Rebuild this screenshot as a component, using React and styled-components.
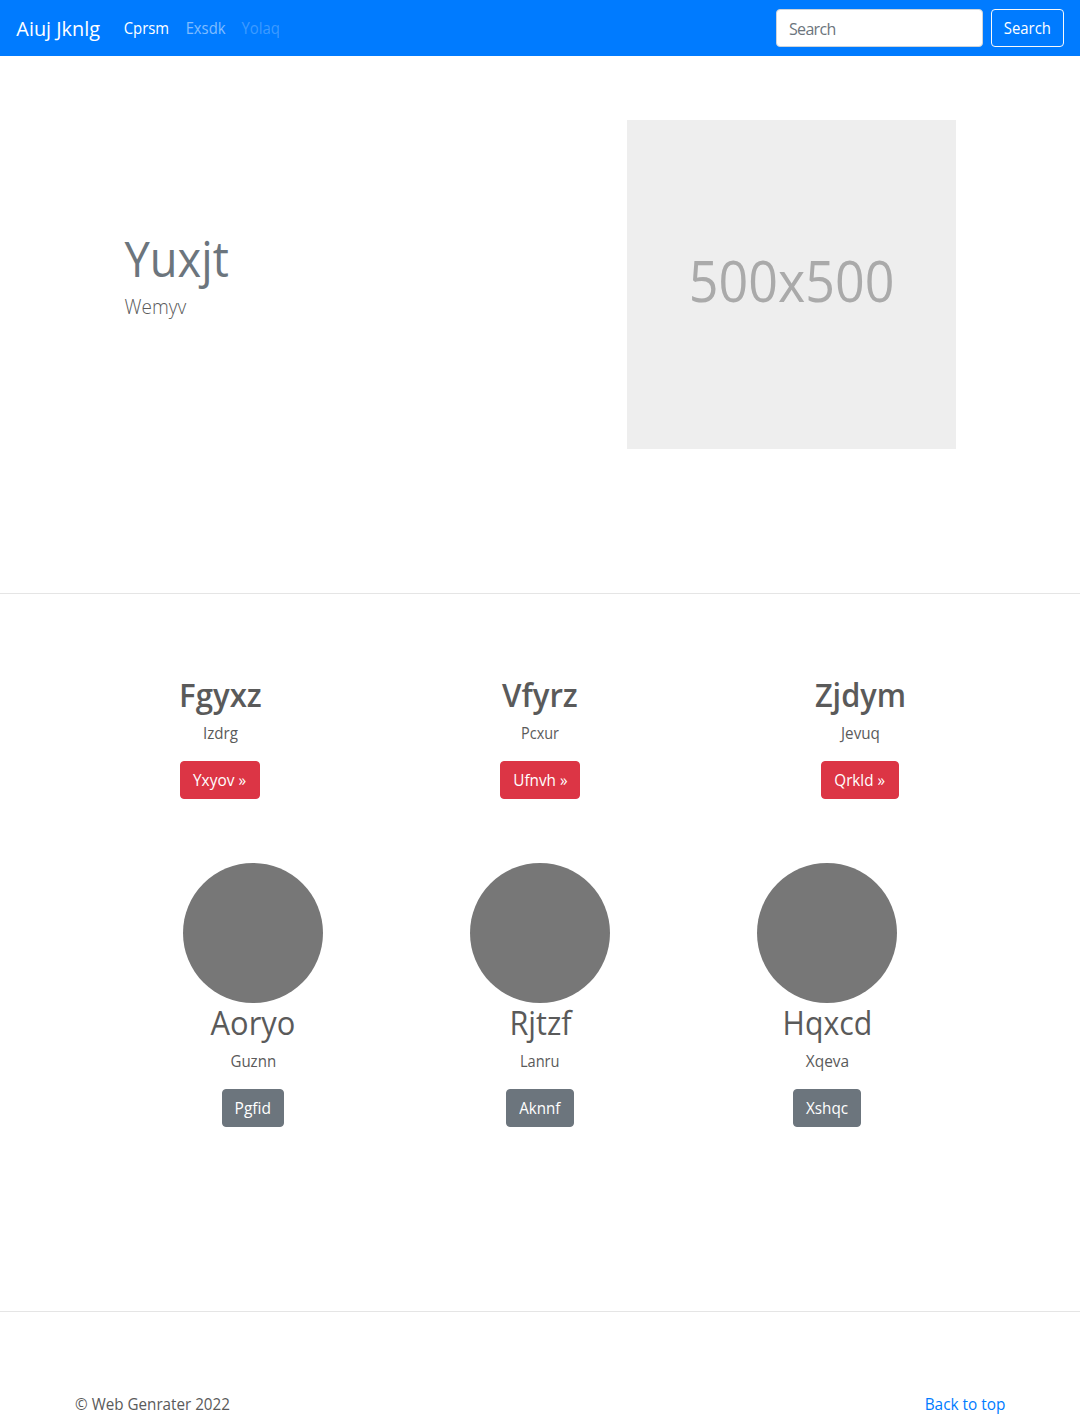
import React from "react";
import styled, { createGlobalStyle } from "styled-components";

const GlobalStyle = createGlobalStyle`
  *, *::before, *::after { box-sizing: border-box; }
  body {
    margin: 0;
    background: #fff;
    color: #5a5a5a;
    font: 400 16px/1.5 "Open Sans", "Noto Sans", sans-serif;
    font-variant-ligatures: none;
  }
  h1, h2, p { margin: 0; }
  a { text-decoration: none; }
`;

/* Text set slightly narrower than the font's natural width. */
const FitBox = styled.span`
  display: inline-flex;
  justify-content: center;
  width: ${(p) => p.$width}px;
  white-space: pre;
`;
const FitGlyphs = styled.span`
  flex: none;
  transform: scaleX(${(p) => p.$scale});
`;
const Fit = ({ w, k, children }) => (
  <FitBox $width={w}>
    <FitGlyphs $scale={k}>{children}</FitGlyphs>
  </FitBox>
);

const Page = styled.div`
  height: 1416px;
  overflow: hidden;
`;

const Navbar = styled.nav`
  display: flex;
  align-items: center;
  height: 56px;
  padding: 0 16px;
  background: #007bff;
`;
const Brand = styled.a`
  margin-right: 16px;
  padding-top: 2px;
  color: #fff;
  font-size: 20px;
  line-height: 30px;
`;
const NavLinks = styled.div`
  display: flex;
  flex: 1;
`;
const NavLink = styled.a`
  display: flex;
  padding: 8px;
  color: rgba(255, 255, 255, ${(p) => p.$alpha});
`;
const SearchForm = styled.form`
  display: flex;
  gap: 8px;
`;
const SearchInput = styled.input`
  width: 207px;
  height: 38px;
  padding: 8px 12px 6px;
  border: 1px solid #ced4da;
  border-radius: 4px;
  background: #fff;
  font: inherit;
  letter-spacing: -0.68px;
  outline: none;
  &::placeholder { color: #6c757d; opacity: 1; }
`;

const tones = {
  outline: ["transparent", "#f8f9fa"],
  danger: ["#dc3545", "#dc3545"],
  secondary: ["#6c757d", "#6c757d"],
};
const Button = styled.button`
  display: inline-flex;
  justify-content: center;
  height: 38px;
  padding: 6px 12px;
  border: 1px solid ${(p) => tones[p.$tone][1]};
  border-radius: 4px;
  background: ${(p) => tones[p.$tone][0]};
  color: #fff;
  font: inherit;
`;

const Hero = styled.section`
  display: flex;
  justify-content: space-between;
  height: 537px;
  padding: 64px 124px 0;
`;
const HeroCopy = styled.div`
  padding-top: 113px;
`;
const HeroTitle = styled.h1`
  color: #6c757d;
  font-size: 50px;
  font-weight: 400;
  line-height: 50px;
`;
const HeroLead = styled.p`
  margin-top: 9px;
  font-size: 20px;
  font-weight: 300;
  line-height: 30px;
`;
const Placeholder = styled.div`
  display: flex;
  align-items: center;
  justify-content: center;
  width: 329px;
  height: 329px;
  padding: 0 0 10px 1px;
  background: #eee;
  color: #aaa;
  font-size: 56px;
  line-height: 56px;
`;

const Rule = styled.hr`
  height: 1px;
  margin: 0;
  border: 0;
  background: rgba(0, 0, 0, 0.1);
`;

const Columns = styled.section`
  display: grid;
  grid-template-columns: repeat(3, 1fr);
  width: ${(p) => p.$width}px;
  margin: 0 auto;
  padding-top: ${(p) => p.$top}px;
`;
const Column = styled.article`
  display: flex;
  flex-direction: column;
  align-items: center;
`;
const Circle = styled.div`
  width: 140px;
  height: 140px;
  border-radius: 50%;
  background: #777;
`;
const Heading = styled.h2`
  display: flex;
  height: 38px;
  margin-bottom: 8px;
  padding-top: 1px;
  font-size: 32px;
  font-weight: ${(p) => p.$weight};
  line-height: 38px;
`;
const Blurb = styled.p`
  display: flex;
  margin-bottom: 16px;
`;

const Main = styled.main`
  height: 717px;
`;
const Footer = styled.footer`
  display: flex;
  justify-content: space-between;
  padding: 80px 75px 0;
`;
const FooterLink = styled.a`
  color: #007bff;
`;

const features = [
  { title: ["Fgyxz", 84, 0.975], text: ["Izdrg", 37, 0.945], action: ["Yxyov »", 54, 0.965] },
  { title: ["Vfyrz", 76, 0.975], text: ["Pcxur", 38, 0.902], action: ["Ufnvh »", 54, 0.957] },
  { title: ["Zjdym", 92, 0.96], text: ["Jevuq", 40, 0.95], action: ["Qrkld »", 52, 0.95] },
];
const people = [
  { title: ["Aoryo", 84, 0.965], text: ["Guznn", 46, 0.94], action: ["Pgfid", 36, 0.97] },
  { title: ["Rjtzf", 62, 0.955], text: ["Lanru", 40, 0.913], action: ["Aknnf", 42, 0.945] },
  { title: ["Hqxcd", 90, 0.945], text: ["Xqeva", 43, 0.966], action: ["Xshqc", 42, 0.955] },
];

const Label = ({ of: [text, w, k] }) => <Fit w={w} k={k}>{text}</Fit>;

export default function App() {
  return (
    <Page>
      <GlobalStyle />
      <Navbar>
        <Brand href="#"><Fit w={84} k={0.992}>Aiuj Jknlg</Fit></Brand>
        <NavLinks>
          <NavLink href="#" $alpha={1}><Fit w={45.8} k={0.93}>Cprsm</Fit></NavLink>
          <NavLink href="#" $alpha={0.5}><Fit w={39.7} k={0.923}>Exsdk</Fit></NavLink>
          <NavLink href="#" $alpha={0.25}><Fit w={38.4} k={0.93}>Yolaq</Fit></NavLink>
        </NavLinks>
        <SearchForm>
          <SearchInput placeholder="Search" aria-label="Search" />
          <Button type="button" $tone="outline"><Fit w={47} k={0.93}>Search</Fit></Button>
        </SearchForm>
      </Navbar>

      <Hero>
        <HeroCopy>
          <HeroTitle><Fit w={105} k={0.905}>Yuxjt</Fit></HeroTitle>
          <HeroLead><Fit w={62} k={0.95}>Wemyv</Fit></HeroLead>
        </HeroCopy>
        <Placeholder><Fit w={206} k={0.929}>500x500</Fit></Placeholder>
      </Hero>

      <Rule />
      <Main>
        <Columns $width={960} $top={81}>
          {features.map((f) => (
            <Column key={f.title[0]}>
              <Heading $weight={600}><Label of={f.title} /></Heading>
              <Blurb><Label of={f.text} /></Blurb>
              <Button $tone="danger"><Label of={f.action} /></Button>
            </Column>
          ))}
        </Columns>
        <Columns $width={861} $top={64}>
          {people.map((p) => (
            <Column key={p.title[0]}>
              <Circle />
              <Heading $weight={400}><Label of={p.title} /></Heading>
              <Blurb><Label of={p.text} /></Blurb>
              <Button $tone="secondary"><Label of={p.action} /></Button>
            </Column>
          ))}
        </Columns>
      </Main>
      <Rule />

      <Footer>
        <p><Fit w={155} k={0.95}>© Web Genrater 2022</Fit></p>
        <FooterLink href="#"><Fit w={80} k={0.96}>Back to top</Fit></FooterLink>
      </Footer>
    </Page>
  );
}
